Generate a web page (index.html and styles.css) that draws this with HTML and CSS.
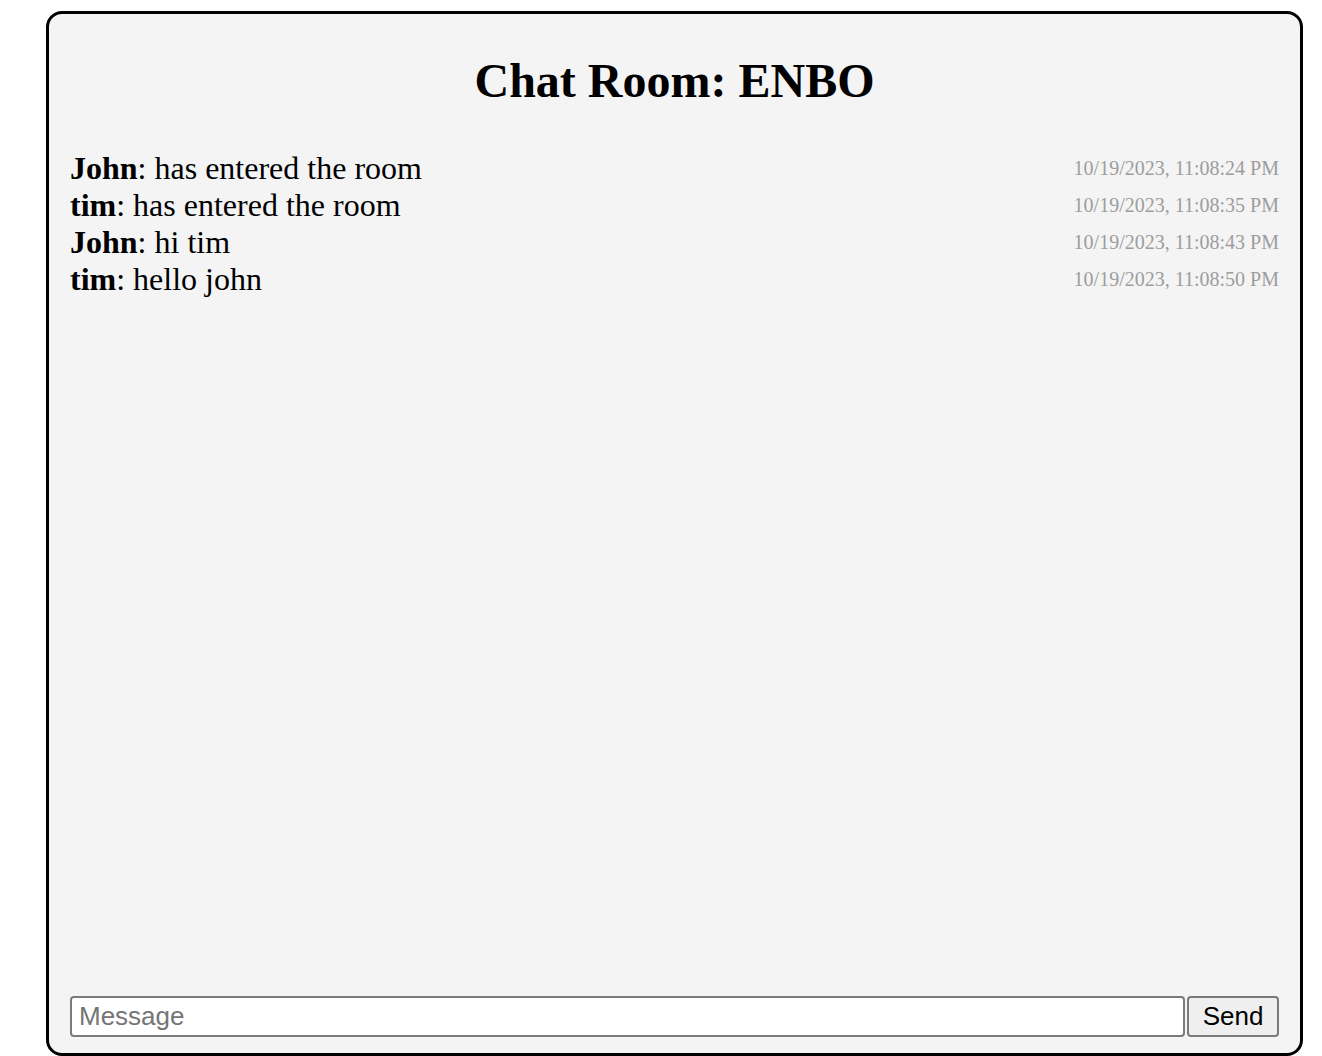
FILE: index.html
```html
<!DOCTYPE html>
<html lang="en">
<head>
    <meta charset="UTF-8">
    <meta name="viewport" content="width=device-width, initial-scale=1.0">
    <title>Chat Room: ENBO</title>
    <link rel="stylesheet" href="styles.css">
</head>
<body>
    <div class="chat-box">
        <h1>Chat Room: ENBO</h1>

        <ul class="messages">
            <li class="message">
                <span><b>John</b>: has entered the room</span>
                <span class="time">10/19/2023, 11:08:24 PM</span>
            </li>
            <li class="message">
                <span><b>tim</b>: has entered the room</span>
                <span class="time">10/19/2023, 11:08:35 PM</span>
            </li>
            <li class="message">
                <span><b>John</b>: hi tim</span>
                <span class="time">10/19/2023, 11:08:43 PM</span>
            </li>
            <li class="message">
                <span><b>tim</b>: hello john</span>
                <span class="time">10/19/2023, 11:08:50 PM</span>
            </li>
        </ul>

        <form class="send-form" onsubmit="return false;">
            <input type="text" class="msg-input" placeholder="Message">
            <button type="submit" class="send-btn">Send</button>
        </form>
    </div>
</body>
</html>
```

FILE: styles.css
```css
body {
    margin: 0;
    background: #fff;
    font-family: "Liberation Serif", "Times New Roman", serif;
}
.chat-box {
    box-sizing: border-box;
    width: 1257px;
    height: 1045px;
    margin: 11px 0 0 46px;
    padding: 0 21px 16px 21px;
    border: 3px solid #000;
    border-radius: 16px;
    background: #f4f4f4;
    display: flex;
    flex-direction: column;
}
h1 {
    font-size: 48px;
    font-weight: bold;
    text-align: center;
    margin: 40px 0 43px 0;
    line-height: 53px;
}
.messages {
    list-style: none;
    margin: 0;
    padding: 0;
    flex: 1;
}
.message {
    display: flex;
    justify-content: space-between;
    align-items: center;
    font-size: 32px;
    line-height: 37px;
}
.time {
    font-size: 20px;
    color: #9d9d9d;
}
.send-form {
    display: flex;
    gap: 2px;
    margin: 0;
}
.msg-input, .send-btn {
    box-sizing: border-box;
    height: 41px;
    font-family: "Liberation Sans", Arial, sans-serif;
    font-size: 26px;
    border: 2px solid #7a7a7a;
    border-radius: 4px;
}
.msg-input {
    flex: 1;
    padding: 0 7px;
    background: #fff;
}
.msg-input::placeholder {
    color: #757575;
}
.send-btn {
    width: 92px;
    padding: 0;
    background: #efefef;
    color: #000;
}
```
